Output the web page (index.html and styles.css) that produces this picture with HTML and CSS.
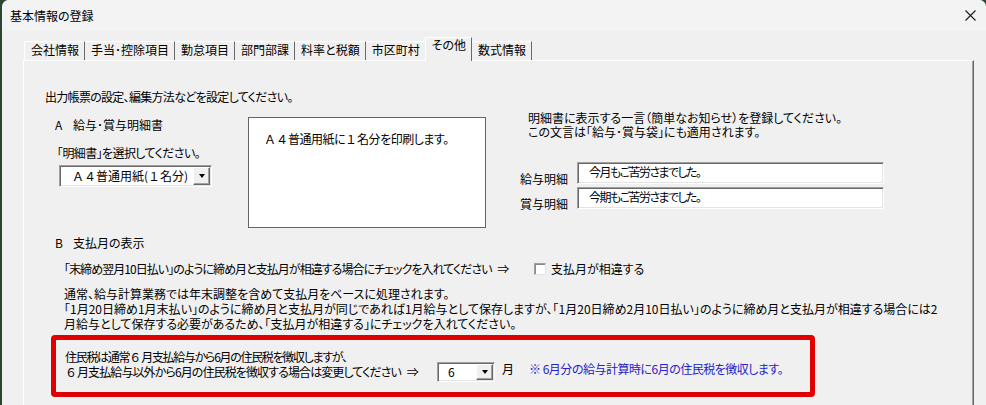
FILE: index.html
```html
<!DOCTYPE html>
<html lang="ja">
<head>
    <meta charset="UTF-8">
    <title>基本情報の登録</title>
    <link rel="stylesheet" href="styles.css">
</head>
<body>
    <div class="window">
        <div class="titlebar">
            <span class="title">基本情報の登録</span>
            <svg class="close" width="11" height="11" viewBox="0 0 11 11">
                <path d="M0.5 0.5 L10.5 10.5 M10.5 0.5 L0.5 10.5" stroke="#1a1a1a" stroke-width="1.1" fill="none"/>
            </svg>
        </div>

        <!-- タブ -->
        <div class="tabs">
            <div class="tab first">会社情報</div>
            <div class="tab">手当･控除項目</div>
            <div class="tab">勤怠項目</div>
            <div class="tab">部門部課</div>
            <div class="tab">料率と税額</div>
            <div class="tab">市区町村</div>
            <div class="tab active">その他</div>
            <div class="tab">数式情報</div>
        </div>

        <div class="panel">
            <p class="intro">出力帳票の設定、編集方法などを設定してください。</p>

            <!-- A 給与・賞与明細書 -->
            <div class="row-a">
                <div class="col-left">
                    <div class="sec-head"><span class="sec-mark">A</span>給与･賞与明細書</div>
                    <div class="hint">｢明細書｣を選択してください。</div>
                    <div class="combo combo-paper">
                        <span class="combo-text"><span class="zen">Ａ４</span>普通用紙(<span class="zen">１</span>名分)</span>
                        <span class="combo-btn"></span>
                    </div>
                </div>
                <div class="preview"><span class="zen">Ａ４</span>普通用紙に<span class="zen">１</span>名分を印刷します。</div>
                <div class="col-right">
                    <div class="notice">
                        <span class="line">明細書に表示する一言（簡単なお知らせ）を登録してください。</span>
                        <span class="line">この文言は｢給与･賞与袋｣にも適用されます。</span>
                    </div>
                    <div class="field">
                        <span class="field-label">給与明細</span>
                        <div class="textbox">今月もご苦労さまでした。</div>
                    </div>
                    <div class="field">
                        <span class="field-label">賞与明細</span>
                        <div class="textbox">今期もご苦労さまでした。</div>
                    </div>
                </div>
            </div>

            <!-- B 支払月の表示 -->
            <div class="sec-head sec-b"><span class="sec-mark">B</span>支払月の表示</div>
            <div class="check-row">
                <span class="check-text">｢末締め翌月10日払い｣のように締め月と支払月が相違する場合にチェックを入れてください <span class="arrow">⇒</span></span>
                <span class="checkbox"></span>
                <span>支払月が相違する</span>
            </div>
            <div class="explain">
                <span class="line">通常、給与計算業務では年末調整を含めて支払月をベースに処理されます。</span>
                <span class="line">｢1月20日締め1月末払い｣のように締め月と支払月が同じであれば1月給与として保存しますが、｢1月20日締め2月10日払い｣のように締め月と支払月が相違する場合には2</span>
                <span class="line">月給与として保存する必要があるため、｢支払月が相違する｣にチェックを入れてください。</span>
            </div>

            <div class="alert-box">
                <div class="alert-text">
                    <span class="line line-a">住民税は通常<span class="zen">６</span>月支払給与から6月の住民税を徴収しますが、</span>
                    <span class="line line-b"><span class="zen">６</span>月支払給与以外から6月の住民税を徴収する場合は変更してください <span class="arrow">⇒</span></span>
                </div>
                <div class="combo combo-month">
                    <span class="combo-text">6</span>
                    <span class="combo-btn"></span>
                </div>
                <span class="unit">月</span>
                <span class="note">※ 6月分の給与計算時に6月の住民税を徴収します。</span>
            </div>
        </div>
    </div>
</body>
</html>
```

FILE: styles.css
```css
body {
    margin: 0;
    background-color: #2c4632;
    font-family: "Noto Sans CJK JP", "Noto Sans", sans-serif;
    font-size: 12px;
    color: #000;
    font-feature-settings: "palt";
    overflow: hidden;
}
p {
    margin: 0;
}
.line {
    display: block;
    white-space: nowrap;
}
.zen {
    font-feature-settings: normal;
    letter-spacing: 0;
}
.arrow {
    letter-spacing: 0;
    margin-left: 4px;
}
.window {
    margin-left: 2px;
    width: 984px;
    height: 405px;
    background-color: #f0f0f0;
    border-radius: 7px 7px 0 0;
    overflow: hidden;
}
.titlebar {
    height: 31px;
    background-color: #f3f3f3;
    display: flex;
    align-items: center;
    justify-content: space-between;
    padding: 0 10px 0 8px;
    box-sizing: border-box;
}
.title {
    line-height: 14px;
}

/* タブ */
.tabs {
    display: flex;
    align-items: flex-end;
    height: 29px;
    margin-left: 22px;
}
.tab {
    height: 19px;
    box-sizing: border-box;
    line-height: 16px;
    padding: 0 5px 0 6px;
    border-top: 1px solid #fff;
    border-right: 1px solid #696969;
}
.tab.first {
    border-left: 1px solid #fff;
}
.tab.active {
    height: 24px;
    line-height: 14px;
    margin-bottom: -1px;
    margin-left: -1px;
    background-color: #f0f0f0;
    border-left: 1px solid #fff;
    position: relative;
}

.panel {
    margin-left: 21px;
    width: 951px;
    height: 346px;
    box-sizing: border-box;
    border-top: 1px solid #fff;
    border-left: 1px solid #fff;
    border-right: 1px solid #696969;
    box-shadow: inset -1px 0 #a0a0a0;
    padding: 29px 0 0 21px;
}
.intro {
    line-height: 14px;
    letter-spacing: -0.7px;
}

/* A */
.row-a {
    display: flex;
    margin-top: 7px;
}
.col-left {
    width: 193px;
    padding: 6px 0 0 10px;
}
.sec-head {
    line-height: 16px;
}
.sec-mark {
    display: inline-block;
    width: 18px;
}
.hint {
    margin: 13px 0 0 2px;
    line-height: 14px;
    letter-spacing: -0.6px;
}
.combo {
    display: flex;
    box-sizing: border-box;
    background-color: #fff;
    border: 1px solid;
    border-color: #a0a0a0 #fff #fff #a0a0a0;
    box-shadow: inset 1px 1px #696969, inset -1px -1px #e3e3e3;
    padding: 1px;
}
.combo-text {
    flex: 1;
    white-space: nowrap;
}
.combo-btn {
    width: 17px;
    box-sizing: border-box;
    background-color: #f0f0f0;
    border: 1px solid;
    border-color: #fff #696969 #696969 #fff;
    box-shadow: inset -1px -1px #a0a0a0;
    display: flex;
    align-items: center;
    justify-content: center;
}
.combo-btn::after {
    content: "";
    width: 0;
    height: 0;
    border-left: 3.5px solid transparent;
    border-right: 3.5px solid transparent;
    border-top: 4px solid #000;
}
.combo-paper {
    margin: 5px 0 0 4px;
    width: 153px;
    height: 22px;
}
.combo-paper .combo-text {
    padding-left: 11px;
    line-height: 18px;
}
.preview {
    margin-top: 6px;
    width: 238px;
    height: 111px;
    box-sizing: border-box;
    border: 1px solid #646464;
    background-color: #fff;
    padding: 14px 0 0 15px;
    line-height: 14px;
    letter-spacing: -0.5px;
}
.col-right {
    margin-left: 34px;
}
.notice {
    padding-left: 8px;
}
.notice .line {
    height: 14px;
    line-height: 14px;
}
.field {
    display: flex;
    align-items: flex-end;
    margin-top: 3px;
}
.notice + .field {
    margin-top: 23px;
}
.field-label {
    width: 57px;
    line-height: 14px;
    margin-bottom: -2px;
}
.textbox {
    width: 307px;
    height: 22px;
    box-sizing: border-box;
    background-color: #fff;
    border: 1px solid;
    border-color: #a0a0a0 #fff #fff #a0a0a0;
    box-shadow: inset 1px 1px #696969, inset -1px -1px #e3e3e3;
    padding: 1px 0 0 11px;
    line-height: 16px;
    letter-spacing: -1.6px;
}

/* B */
.sec-b {
    margin-top: 7px;
    padding-left: 10px;
}
.check-row {
    display: flex;
    align-items: center;
    margin-top: 11px;
    padding-left: 19px;
    line-height: 14px;
}
.check-text {
    width: 470px;
    white-space: nowrap;
    letter-spacing: -0.95px;
}
.checkbox {
    width: 12px;
    height: 12px;
    box-sizing: border-box;
    background-color: #fff;
    border: 1px solid;
    border-color: #a0a0a0 #e3e3e3 #e3e3e3 #a0a0a0;
    box-shadow: inset 1px 1px #8a8a8a;
    margin-right: 5px;
}
.explain {
    margin: 10px 0 0 19px;
}
.explain .line {
    height: 15px;
    line-height: 15px;
}

/* 住民税 */
.alert-box {
    display: flex;
    align-items: flex-start;
    margin: 4px 0 0 6px;
    width: 764px;
    height: 62px;
    box-sizing: border-box;
    border: 5px solid #e00000;
    border-radius: 4px;
    padding: 9px 0 0 9px;
}
.alert-text {
    width: 372px;
}
.alert-text .line {
    height: 15px;
    line-height: 15px;
}
.line-a {
    letter-spacing: -1.3px;
}
.line-b {
    letter-spacing: -0.9px;
}
.combo-month {
    margin-top: 13px;
    width: 58px;
    height: 20px;
}
.combo-month .combo-text {
    padding-left: 9px;
    line-height: 16px;
}
.unit {
    margin: 13px 0 0 7px;
    line-height: 14px;
}
.note {
    margin: 13px 0 0 15px;
    line-height: 14px;
    color: #2323c8;
    letter-spacing: -0.5px;
}
```
